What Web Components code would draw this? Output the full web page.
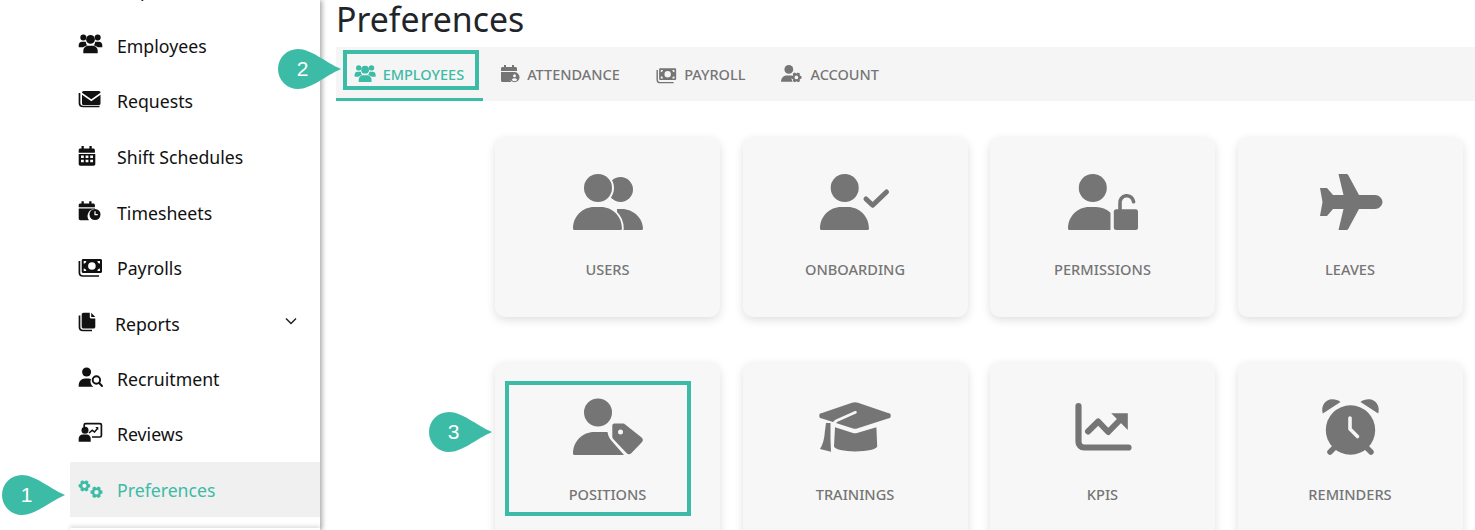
<!DOCTYPE html>
<html lang="en">
<head>
<meta charset="utf-8">
<title>Preferences</title>
<style>
  html, body { margin: 0; height: 530px; overflow: hidden; background: #fff; }
  body { font-family: "Noto Sans", sans-serif; }
</style>
</head>
<body>
<app-shell>
  <side-bar slot="side">
    <nav-item icon="building" label="Departments"></nav-item>
    <nav-item icon="team" label="Employees"></nav-item>
    <nav-item icon="mail" label="Requests"></nav-item>
    <nav-item icon="calendar" label="Shift Schedules"></nav-item>
    <nav-item icon="timesheet" label="Timesheets" style="--nudge:2px"></nav-item>
    <nav-item icon="money" label="Payrolls"></nav-item>
    <nav-item icon="files" label="Reports" expandable style="--nudge:2px"></nav-item>
    <nav-item icon="recruit" label="Recruitment"></nav-item>
    <nav-item icon="review" label="Reviews"></nav-item>
    <nav-item icon="cogs" label="Preferences" active></nav-item>
  </side-bar>

  <page-title>Preferences</page-title>
  <tab-bar>
    <tab-item icon="team" label="EMPLOYEES" active style="--gap:5.5px;padding-right:19px"></tab-item>
    <tab-item icon="attendance" label="ATTENDANCE"></tab-item>
    <tab-item icon="money" label="PAYROLL"></tab-item>
    <tab-item icon="account" label="ACCOUNT"></tab-item>
  </tab-bar>
  <card-grid>
    <setting-card icon="users" label="USERS"></setting-card>
    <setting-card icon="onboarding" label="ONBOARDING"></setting-card>
    <setting-card icon="permissions" label="PERMISSIONS"></setting-card>
    <setting-card icon="plane" label="LEAVES"></setting-card>
    <setting-card icon="positions" label="POSITIONS"></setting-card>
    <setting-card icon="cap" label="TRAININGS"></setting-card>
    <setting-card icon="kpis" label="KPIS"></setting-card>
    <setting-card icon="alarm" label="REMINDERS"></setting-card>
  </card-grid>

  <focus-box slot="over" style="left:343px;top:50px;width:136px;height:40px"></focus-box>
  <focus-box slot="over" style="left:505px;top:381px;width:186px;height:135px"></focus-box>
  <call-out slot="over" style="left:2px;top:475px">1</call-out>
  <call-out slot="over" style="left:278px;top:49px">2</call-out>
  <call-out slot="over" style="left:429px;top:412px">3</call-out>
</app-shell>

<script>
// little gear, used by the cogs and account icons
function gear(cx, cy, r, hole) {
  let d = "";
  const teeth = 6;
  for (let i = 0; i < teeth; i++) {
    const a = (i / teeth) * Math.PI * 2;
    const step = Math.PI / teeth;
    const pts = [
      [r * 0.74, a - step * 0.95],
      [r, a - step * 0.42],
      [r, a + step * 0.42],
      [r * 0.74, a + step * 0.95],
    ];
    pts.forEach((p, j) => {
      const x = cx + p[0] * Math.cos(p[1]);
      const y = cy + p[0] * Math.sin(p[1]);
      d += (i === 0 && j === 0 ? "M" : "L") + x.toFixed(2) + " " + y.toFixed(2);
    });
  }
  d += "Z";
  const h = r * hole;
  d += `M${cx - h} ${cy}a${h} ${h} 0 1 0 ${h * 2} 0a${h} ${h} 0 1 0 ${-h * 2} 0Z`;
  return d;
}

const CARD_BG = "#f7f7f7";
const BODY = "M1.5 56a1.5 1.5 0 0 1-1.5-1.5C0 42 10 33 21 33h7c11 0 21 9 21 21.5a1.5 1.5 0 0 1-1.5 1.5Z";

const ICONS = {
  building: [26, 22, `<rect x="3" y="3" width="16" height="18" rx="2" fill="currentColor"/>`],
  team: [26, 22, `
    <circle cx="12.5" cy="6.4" r="4.4" fill="currentColor"/>
    <circle cx="5.3" cy="4.4" r="3" fill="currentColor"/>
    <circle cx="19.7" cy="4.4" r="3" fill="currentColor"/>
    <path fill="currentColor" d="M5.3 20.3v-2.4c0-3 2.4-5.2 5-5.2h4.4c2.6 0 5 2.2 5 5.2v2.4Z"/>
    <path fill="currentColor" d="M.7 14.2v-2c0-2 1.4-3.4 3.2-3.4h2.8c.5 0 .9.1 1.2.3-.1 1.400.5 2.500 1.300 3.100-1.700.6-3.100 1.400-4.100 2Z"/>
    <path fill="currentColor" d="M24.300 14.200v-2c0-2-1.400-3.400-3.200-3.400h-2.800c-.5 0-.9.1-1.200.3.1 1.400-.5 2.500-1.300 3.100 1.700.6 3.100 1.400 4.100 2Z"/>`],
  mail: [26, 22, `
    <path fill="none" stroke="currentColor" stroke-width="1.700" d="M1.500 5v10c0 2 1.500 3.500 3.500 3.500h16.500"/>
    <path fill="currentColor" d="M5.500 3h15.500a1.500 1.500 0 0 1 1.500 1.500v.3l-9.200 6.400-9.300-6.400v-.3A1.500 1.500 0 0 1 5.500 3Z"/>
    <path fill="currentColor" d="M4 6.800l9.300 6.400 9.200-6.400v8.700a1.500 1.500 0 0 1-1.500 1.500H5.500A1.500 1.500 0 0 1 4 15.500Z"/>`],
  calendar: [26, 22, `
    <path fill="currentColor" fill-rule="evenodd" d="M3.500 2h2.300v2.500h5.600V2h2.300v2.500h1.500c1 0 1.700.7 1.700 1.700v2.500H.7V6.200c0-1 .7-1.700 1.700-1.700h1.100ZM.7 10h16.600v10c0 1-.7 1.700-1.700 1.700H2.400c-1 0-1.700-.7-1.700-1.700ZM3 11.500v2.500h2.800v-2.500ZM7.600 11.500v2.500h2.800v-2.500ZM12.200 11.500v2.500H15v-2.500ZM3 15.800v2.500h2.800v-2.500ZM7.600 15.800v2.500h2.800v-2.500ZM12.200 15.800v2.500H15v-2.500Z"/>`],
  timesheet: [26, 22, `
    <path fill="currentColor" d="M3.500 2.200h2.300v2.300h5.400V2.200h2.300v2.300h1.700c1 0 1.700.7 1.700 1.700v2H.7v-2c0-1 .7-1.700 1.700-1.700h1.100ZM.7 9.500H17v.5a7 7 0 0 0-6 11.200H2.400c-1 0-1.700-.7-1.700-1.700Z"/>
    <circle cx="17" cy="15.500" r="5.500" fill="currentColor"/>
    <path fill="none" stroke="#fff" stroke-width="1.200" stroke-linecap="round" d="M17 12.700v3h2.300"/>`],
  money: [26, 22, `
    <path fill="none" stroke="currentColor" stroke-width="1.700" d="M1.400 6v11.500c0 2 1.500 3.500 3.500 3.500H21"/>
    <path fill="currentColor" fill-rule="evenodd" d="M5.200 4h17.300c.9 0 1.500.6 1.500 1.500v11c0 .9-.6 1.500-1.500 1.500H5.200c-.9 0-1.500-.6-1.500-1.500v-11c0-.9.6-1.500 1.500-1.500ZM13.900 7.200a3.800 3.800 0 1 0 0 7.600 3.800 3.800 0 0 0 0-7.600ZM5.700 6v2.600c1.500 0 2.600-1.100 2.600-2.600ZM19.400 6c0 1.500 1.100 2.600 2.600 2.600V6ZM5.700 13.400V16h2.600c0-1.500-1.100-2.600-2.600-2.600ZM22 13.400c-1.500 0-2.600 1.100-2.600 2.600H22Z"/>`],
  files: [26, 22, `
    <path fill="none" stroke="currentColor" stroke-width="1.700" d="M1.500 5.500v11.500c0 2 1.500 3.500 3.500 3.500h9"/>
    <path fill="currentColor" d="M5.500 2.800h6.300v4.400c0 .7.500 1.200 1.200 1.200h4.300v8.300c0 1-.8 1.800-1.800 1.800H5.500c-1 0-1.800-.8-1.800-1.800V4.600c0-1 .8-1.800 1.800-1.800ZM13.200 2.800l4.100 4.200h-4.100Z"/>`],
  recruit: [26, 22, `
    <circle cx="8.600" cy="6" r="4.500" fill="currentColor"/>
    <path fill="currentColor" d="M.7 20.700v-1.200c0-4 2.700-7 6.300-7h3.300c1 0 1.900.2 2.700.6a6 6 0 0 0 2.300 7.600Z"/>
    <circle cx="18.400" cy="14" r="3.700" fill="none" stroke="currentColor" stroke-width="1.900"/>
    <path stroke="currentColor" stroke-width="2" stroke-linecap="round" d="M21.200 17l2.800 3"/>`],
  review: [26, 22, `
    <path fill="none" stroke="currentColor" stroke-width="1.700" d="M6.200 6V4c0-.8.600-1.300 1.300-1.300H22c.8 0 1.400.6 1.400 1.300v10.600c0 .8-.6 1.400-1.400 1.400h-8"/>
    <path fill="none" stroke="currentColor" stroke-width="1.500" d="M11 12l3.200-2.800 2.300 1.800 3-3.500"/>
    <path fill="currentColor" d="M17.300 6h3v3Z"/>
    <circle cx="7" cy="9.200" r="3.500" fill="currentColor"/>
    <path fill="currentColor" d="M.7 20.800v-3c0-2.400 1.800-4.300 4-4.300h4c2.200 0 4 1.900 4 4.300v3Z"/>`],
  cogs: [26, 22, `
    <path fill="currentColor" fill-rule="evenodd" d="${gear(6.400, 8.800, 5.900, 0.36)}"/>
    <path fill="currentColor" fill-rule="evenodd" d="${gear(18.500, 15.200, 6.100, 0.36)}"/>`],
  attendance: [19.5, 18, `
    <path fill="currentColor" d="M3 0h2v2h6V0h2v2h1.500C15.400 2 16 2.600 16 3.500V6H0V3.500C0 2.600.6 2 1.500 2H3ZM0 7h16v.2a6.500 6.500 0 0 0-5.800 9.800H1.500C.6 17 0 16.400 0 15.500Z"/>
    <circle cx="13.500" cy="12.300" r="5" fill="currentColor"/>
    <circle cx="13.500" cy="10.800" r="1.500" fill="#f5f5f5"/>
    <path fill="#f5f5f5" d="M10.800 15c.3-1.200 1.400-1.800 2.700-1.800s2.400.6 2.700 1.800a3.800 3.800 0 0 1-5.400 0Z"/>`],
  account: [22.5, 18, `
    <circle cx="7.800" cy="4.400" r="4.400" fill="currentColor"/>
    <path fill="currentColor" d="M0 16.800c0-3.800 2.500-6.300 5.600-6.300h4.200c.5 0 1 .1 1.500.2a6 6 0 0 0 .3 6.100Z"/>
    <path fill="currentColor" fill-rule="evenodd" d="${gear(15.400, 12.400, 5.200, 0.36)}"/>`],

  // card icons: 70x56 canvas
  users: [70, 56, `
    <circle cx="47.500" cy="15.500" r="12.500" fill="currentColor"/>
    <path fill="currentColor" d="M44 35h5c11 0 21 9 21 19.500a1.500 1.500 0 0 1-1.500 1.500H44Z"/>
    <circle cx="25" cy="14" r="16" fill="${CARD_BG}"/>
    <circle cx="25" cy="14" r="14" fill="currentColor"/>
    <path fill="currentColor" stroke="${CARD_BG}" stroke-width="3.500" paint-order="stroke" d="${BODY}"/>`],
  onboarding: [70, 56, `
    <circle cx="24.700" cy="14" r="14" fill="currentColor"/>
    <path fill="currentColor" d="${BODY}"/>
    <path fill="none" stroke="currentColor" stroke-width="5" stroke-linecap="round" stroke-linejoin="round" d="M46 25l6.700 6.300L66.500 18"/>`],
  permissions: [70, 56, `
    <circle cx="24.800" cy="14" r="14" fill="currentColor"/>
    <path fill="currentColor" d="M1.500 56a1.500 1.500 0 0 1-1.500-1.500C0 42 10 33 21 33h7c5.600 0 10.700 2.200 14.500 5.800V56Z"/>
    <rect x="45.800" y="35.300" width="24.200" height="20.700" rx="2.500" fill="currentColor"/>
    <path fill="none" stroke="currentColor" stroke-width="3.600" stroke-linecap="round" d="M52 36v-6.500a6.800 6.800 0 0 1 13.600-1.800"/>`],
  plane: [70, 56, `
    <path fill="currentColor" d="M23.500 0h8a2 2 0 0 1 1.700 1L44 21h16c4 0 7.500 3.500 7.500 7s-3.500 7-7.500 7H44L33.200 55a2 2 0 0 1-1.700 1h-8l5-21H18l-6 7H5l2.500-14L5 14h7l6 7h10.500Z"/>`],
  positions: [70, 56, `
    <ellipse cx="25" cy="13.500" rx="14" ry="14" fill="currentColor"/>
    <path fill="currentColor" d="M1.500 56a1.500 1.500 0 0 1-1.500-1.500C0 42 10 33 21 33h13.500c.5 3.500 1.800 6.300 4 8.700L51 56Z"/>
    <path fill="currentColor" fill-rule="evenodd" d="M41 24.500h9a3 3 0 0 1 2.200.9L68.600 38.500a3.500 3.500 0 0 1 0 5L58.500 54a3.500 3.500 0 0 1-5 0L40.200 40a3 3 0 0 1-.9-2.200V26.500a2 2 0 0 1 1.700-2ZM47.500 30.500a2.500 2.500 0 1 0 0 5 2.500 2.500 0 0 0 0-5Z"/>`],
  cap: [70, 56, `
    <path fill="currentColor" d="M15 28.300L33 34c1.300.4 2.700.4 4 0l19.400-5.700 .8 19c0 3-10 5.200-22.200 5.200-10.500 0-21.200-2.200-21-5.200Z"/>
    <path fill="currentColor" d="M2 19.500a1.800 1.800 0 0 1 0-5.500L32 3.700c2-.7 4-.7 6 0L68 14a1.800 1.800 0 0 1 0 5.500L37 29.500c-1.300.4-2.700.4-4 0Z"/>
    <path fill="currentColor" d="M6 24h4.500v16l.5 12.700L0 50c2.500-4 4.500-10 4.800-17Z"/>
    <path fill="none" stroke="${CARD_BG}" stroke-width="2.600" stroke-linecap="round" d="M35.500 13.300L17 21.500C14 23 12.500 26 12.500 30V52"/>`],
  kpis: [70, 56, `
    <path fill="none" stroke="currentColor" stroke-width="6.200" stroke-linecap="round" d="M10.500 7V43a5.500 5.500 0 0 0 5.500 5.500H60.500"/>
    <path fill="none" stroke="currentColor" stroke-width="6" stroke-linecap="round" stroke-linejoin="round" d="M20 32.500l10.200-10 10 10.500L52 21"/>
    <path fill="currentColor" d="M43.200 14.300H59.800V31Z"/>`],
  alarm: [70, 56, `
    <path fill="currentColor" d="M7.800 14.500C5.500 7 10.500.5 17 .3c3-.1 6.500 1 8.500 2.700Z"/>
    <path fill="currentColor" d="M63.200 14.500C65.500 7 60.500.5 54 .3c-3-.1-6.500 1-8.500 2.700Z"/>
    <path stroke="currentColor" stroke-width="5.500" stroke-linecap="round" d="M15 53l6-6M56 53l-6-6"/>
    <circle cx="35.500" cy="31" r="24.700" fill="currentColor"/>
    <path fill="none" stroke="${CARD_BG}" stroke-width="3.600" stroke-linecap="round" stroke-linejoin="round" d="M35 19V30l7.500 7.500"/>`],
};

class UiIcon extends HTMLElement {
  connectedCallback() {
    const [w, h, body] = ICONS[this.getAttribute("name")];
    const scale = parseFloat(this.getAttribute("scale") || "1");
    this.attachShadow({ mode: "open" }).innerHTML = `
      <style>:host { display: block; line-height: 0; flex: none; } svg { display: block; overflow: visible; }</style>
      <svg width="${w * scale}" height="${h * scale}" viewBox="0 0 ${w} ${h}" aria-hidden="true">${body}</svg>`;
  }
}

class AppShell extends HTMLElement {
  constructor() {
    super();
    this.attachShadow({ mode: "open" }).innerHTML = `
      <style>
        :host { display: grid; grid-template-columns: 320px 1fr; position: relative; height: 530px; overflow: hidden; }
        .main { padding-left: 16px; min-width: 0; }
      </style>
      <slot name="side"></slot>
      <div class="main"><slot></slot></div>
      <slot name="over"></slot>`;
  }
}

class SideBar extends HTMLElement {
  constructor() {
    super();
    this.attachShadow({ mode: "open" }).innerHTML = `
      <style>
        :host {
          display: block; height: 530px; box-sizing: border-box; overflow: visible;
          background: #fff; box-shadow: 2px 0 5px rgba(0,0,0,.35); position: relative; z-index: 1;
        }
        .list { margin-top: -37.75px; padding-left: 70px; }
        .next { height: 20px; margin: 11px 0 0 70px; box-shadow: 0 -2px 4px rgba(0,0,0,.13); }
      </style>
      <div class="list"><slot></slot></div>
      <div class="next"></div>`;
  }
}

class NavItem extends HTMLElement {
  connectedCallback() {
    const label = this.getAttribute("label");
    const chevron = this.hasAttribute("expandable")
      ? `<svg class="chev" width="12" height="8" viewBox="0 0 12 8"><path d="M1 1.500l5 5 5-5" fill="none" stroke="#222" stroke-width="1.500"/></svg>`
      : "";
    this.attachShadow({ mode: "open" }).innerHTML = `
      <style>
        :host {
          display: flex; align-items: center; height: 55.5px; padding-left: 8px;
          font: 17.7px/24px "Noto Sans", sans-serif; color: #111;
        }
        :host([active]) { background: #f0f0f0; color: #3cbba6; }
        ui-icon { margin-bottom: 4px; }
        span { margin-left: 13px; margin-top: var(--nudge, 0); flex: 1; }
        :host([expandable]) span { margin-left: 11px; }
        .chev { margin: 0 23px 4px 0; }
      </style>
      <ui-icon name="${this.getAttribute("icon")}"></ui-icon>
      <span>${label}</span>${chevron}`;
  }
}

class PageTitle extends HTMLElement {
  constructor() {
    super();
    this.attachShadow({ mode: "open" }).innerHTML = `
      <style>
        :host { display: block; height: 47px; font: 400 33.8px/38px "Noto Sans", sans-serif; color: #212529; }
      </style>
      <slot></slot>`;
  }
}

class TabBar extends HTMLElement {
  constructor() {
    super();
    this.attachShadow({ mode: "open" }).innerHTML = `
      <style>:host { display: flex; height: 54px; background: #f5f5f5; }</style>
      <slot></slot>`;
  }
}

class TabItem extends HTMLElement {
  connectedCallback() {
    const icon = this.getAttribute("icon");
    const scale = icon === "team" ? 0.89 : icon === "money" ? 0.84 : 1;
    this.attachShadow({ mode: "open" }).innerHTML = `
      <style>
        :host {
          display: flex; align-items: center; gap: var(--gap, 6.5px); padding: 3px 18px 0; box-sizing: border-box;
          border-bottom: 3px solid transparent;
          font: 500 14.5px/20px "Noto Sans", sans-serif; color: #757575;
        }
        :host([active]) { color: #3cbba6; border-bottom-color: #3cbba6; }
      </style>
      <ui-icon name="${icon}" scale="${scale}"></ui-icon>
      <span>${this.getAttribute("label")}</span>`;
  }
}

class CardGrid extends HTMLElement {
  constructor() {
    super();
    this.attachShadow({ mode: "open" }).innerHTML = `
      <style>
        :host {
          display: grid; grid-template-columns: repeat(4, 225px); gap: 45px 22.5px;
          padding: 36px 0 0 159px;
        }
      </style>
      <slot></slot>`;
  }
}

class SettingCard extends HTMLElement {
  connectedCallback() {
    this.attachShadow({ mode: "open" }).innerHTML = `
      <style>
        :host {
          display: flex; flex-direction: column; align-items: center; height: 180px; padding-top: 37px;
          box-sizing: border-box; background: ${CARD_BG}; border-radius: 10px;
          box-shadow: 0 3px 10px rgba(0,0,0,.13);
          color: #757575;
        }
        span { margin-top: 29px; font: 500 14.6px/20px "Noto Sans", sans-serif; }
      </style>
      <ui-icon name="${this.getAttribute("icon")}"></ui-icon>
      <span>${this.getAttribute("label")}</span>`;
  }
}

class FocusBox extends HTMLElement {
  constructor() {
    super();
    this.attachShadow({ mode: "open" }).innerHTML = `
      <style>
        :host { display: block; position: absolute; box-sizing: border-box; border: 4px solid #3cbba6; z-index: 2; }
      </style>`;
  }
}

class CallOut extends HTMLElement {
  constructor() {
    super();
    this.attachShadow({ mode: "open" }).innerHTML = `
      <style>
        :host { display: block; position: absolute; width: 63px; height: 40px; z-index: 3; }
        svg { position: absolute; inset: 0; display: block; }
        span {
          position: absolute; left: 0; top: 0; width: 49px; text-align: center;
          font: 21px/40px "Liberation Sans", Arial, sans-serif; color: #fff;
        }
      </style>
      <svg width="63" height="40" viewBox="0 0 63 40"><path fill="#3cbba6" d="M20 0C33 0 47 13 63 20 47 27 33 40 20 40A20 20 0 0 1 20 0Z"/></svg>
      <span><slot></slot></span>`;
  }
}

customElements.define("ui-icon", UiIcon);
customElements.define("app-shell", AppShell);
customElements.define("side-bar", SideBar);
customElements.define("nav-item", NavItem);
customElements.define("page-title", PageTitle);
customElements.define("tab-bar", TabBar);
customElements.define("tab-item", TabItem);
customElements.define("card-grid", CardGrid);
customElements.define("setting-card", SettingCard);
customElements.define("focus-box", FocusBox);
customElements.define("call-out", CallOut);
</script>
</body>
</html>
